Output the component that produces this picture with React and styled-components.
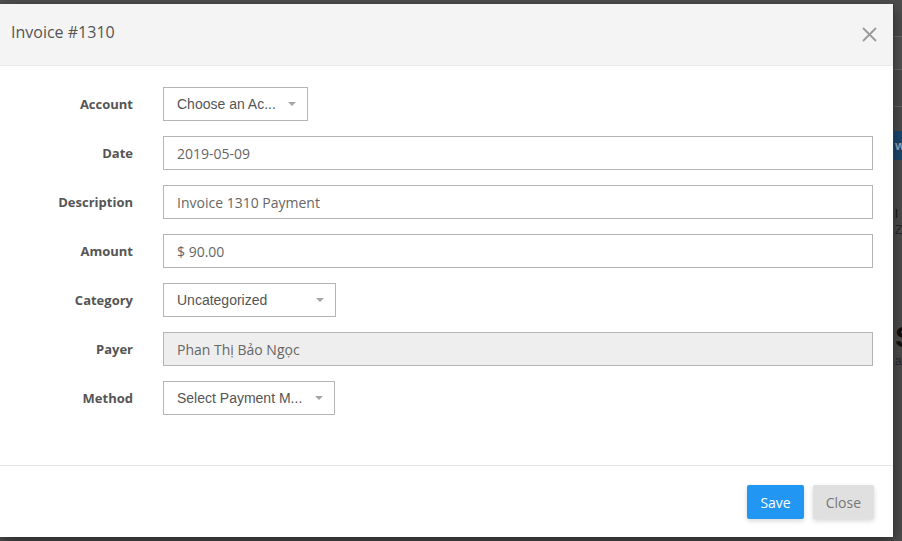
import React from "react";
import styled, { createGlobalStyle } from "styled-components";

const GlobalStyle = createGlobalStyle`
  html, body {
    margin: 0;
    padding: 0;
    background: #595959;
    overflow: hidden;
  }
  * { box-sizing: border-box; }
`;

const Screen = styled.div`
  display: flex;
  width: 902px;
  height: 541px;
  padding-top: 4px;
  background: #4f4f4f;
`;

const Modal = styled.div`
  display: flex;
  flex-direction: column;
  width: 894px;
  height: 533px;
  background: #fff;
  border-right: 1px solid #3a3a3a;
  box-shadow: 0 5px 15px rgba(0, 0, 0, 0.5);
  font-family: "Open Sans", sans-serif;
  position: relative;
  z-index: 1;
`;

const Header = styled.div`
  display: flex;
  align-items: center;
  justify-content: space-between;
  height: 62px;
  padding: 0 16px 0 11px;
  background: #f4f4f4;
  border-bottom: 1px solid #e8e8e8;
`;

const Title = styled.h4`
  margin: 0 0 6px;
  font-size: 16px;
  font-weight: 400;
  color: #555;
`;

const CloseX = styled.button`
  border: 0;
  background: none;
  padding: 0;
  display: flex;
  cursor: pointer;
`;

const Body = styled.div`
  flex: 1;
  display: grid;
  grid-template-columns: 133px 1fr;
  column-gap: 30px;
  row-gap: 15px;
  align-content: start;
  padding: 21px 20px 0 0;
  border-bottom: 1px solid #e5e5e5;
`;

const Label = styled.label`
  display: flex;
  align-items: center;
  justify-content: flex-end;
  height: 34px;
  font-size: 13px;
  font-weight: 700;
  color: #555;
`;

const Input = styled.div`
  display: flex;
  align-items: center;
  height: 34px;
  padding: 0 13px;
  border: 1px solid #b5b5b5;
  background: ${(p) => (p.$disabled ? "#eeeeee" : "#fff")};
  font-size: 14px;
  color: #666;
  width: ${(p) => p.$width || "auto"};
  justify-self: ${(p) => (p.$width ? "start" : "stretch")};
`;

const Select = styled(Input)`
  justify-content: space-between;
  font-family: "Liberation Sans", Arial, sans-serif;
  color: #555;
  padding-right: 11px;
`;

const Caret = styled.span`
  width: 0;
  height: 0;
  border-left: 4px solid transparent;
  border-right: 4px solid transparent;
  border-top: 4px solid #a5a5a5;
`;

const Footer = styled.div`
  display: flex;
  justify-content: flex-end;
  gap: 9px;
  height: 71px;
  padding: 19px 19px 0 0;
`;

const Button = styled.button`
  height: 34px;
  padding: 0 13px;
  border: 0;
  border-radius: 2px;
  font-family: "Open Sans", sans-serif;
  font-size: 14px;
  background: ${(p) => (p.$primary ? "#2196f3" : "#e0e0e0")};
  color: ${(p) => (p.$primary ? "#fff" : "#777")};
  box-shadow: 0 2px 5px rgba(0, 0, 0, 0.16);
`;

const Backdrop = styled.div`
  flex: 1;
  display: flex;
  flex-direction: column;
  font-family: "Liberation Sans", Arial, sans-serif;
  overflow: hidden;
`;

const BackBand = styled.div`
  height: ${(p) => p.$h}px;
  background: ${(p) => p.$bg || "transparent"};
  border-bottom: ${(p) => (p.$line ? "1px solid #6a6a6a" : "0")};
  color: ${(p) => p.$color || "#222"};
  font-size: ${(p) => p.$size || 13}px;
  font-weight: ${(p) => p.$weight || 400};
  line-height: ${(p) => p.$h}px;
  padding-left: 1px;
  white-space: nowrap;
  overflow: hidden;
`;

const fields = [
  { label: "Account", value: "Choose an Ac...", select: true, width: "145px" },
  { label: "Date", value: "2019-05-09" },
  { label: "Description", value: "Invoice 1310 Payment" },
  { label: "Amount", value: "$ 90.00" },
  { label: "Category", value: "Uncategorized", select: true, width: "173px" },
  { label: "Payer", value: "Phan Thị Bảo Ngọc", disabled: true },
  { label: "Method", value: "Select Payment M...", select: true, width: "172px" },
];

export default function App() {
  return (
    <>
      <GlobalStyle />
      <Screen>
        <Modal>
          <Header>
            <Title>Invoice #1310</Title>
            <CloseX aria-label="Close">
              <svg width="15" height="15" viewBox="0 0 15 15">
                <path d="M1 1L14 14M14 1L1 14" stroke="#9a9a9a" strokeWidth="1.8" />
              </svg>
            </CloseX>
          </Header>
          <Body>
            {fields.map((f) => (
              <React.Fragment key={f.label}>
                <Label>{f.label}</Label>
                {f.select ? (
                  <Select $width={f.width}>
                    {f.value}
                    <Caret />
                  </Select>
                ) : (
                  <Input $disabled={f.disabled}>{f.value}</Input>
                )}
              </React.Fragment>
            ))}
          </Body>
          <Footer>
            <Button $primary>Save</Button>
            <Button>Close</Button>
          </Footer>
        </Modal>
        <Backdrop>
          <BackBand $h={33} $line />
          <BackBand $h={33} $bg="#555" $line />
          <BackBand $h={37} $line />
          <BackBand $h={24} />
          <BackBand $h={29} $bg="#1d4a72" $color="#9fb3c6" $weight={700}>w</BackBand>
          <BackBand $h={46} />
          <BackBand $h={16} $color="#1a1a1a">l</BackBand>
          <BackBand $h={16} $color="#2a2a2a" $size={12}>Za</BackBand>
          <BackBand $h={82} />
          <BackBand $h={34} $color="#111" $size={30} $weight={700}>S</BackBand>
          <BackBand $h={14} $color="#2a2a2a" $size={12}>a</BackBand>
        </Backdrop>
      </Screen>
    </>
  );
}
